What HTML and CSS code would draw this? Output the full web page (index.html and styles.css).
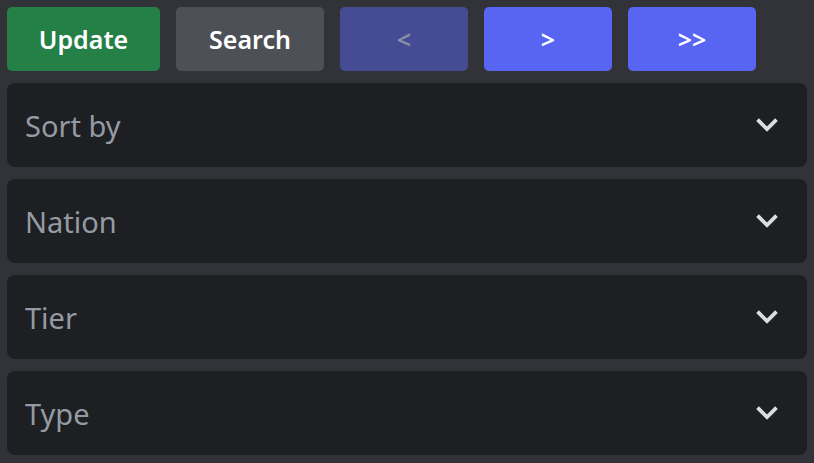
FILE: index.html
```html
<!DOCTYPE html>
<html>
<head>
<meta charset="utf-8">
<link rel="stylesheet" href="styles.css">
</head>
<body>
<div class="panel">
  <div class="row">
    <button class="btn btn-green">Update</button>
    <button class="btn btn-grey">Search</button>
    <button class="btn btn-blurple btn-disabled">&lt;</button>
    <button class="btn btn-blurple">&gt;</button>
    <button class="btn btn-blurple">&gt;&gt;</button>
  </div>
  <div class="select"><span class="placeholder">Sort by</span><svg class="chev" viewBox="0 0 24 24" width="28" height="28"><path d="M5 8.5 L12 15.5 L19 8.5" fill="none" stroke="#dbdee1" stroke-width="3.2" stroke-linecap="square"/></svg></div>
  <div class="select"><span class="placeholder">Nation</span><svg class="chev" viewBox="0 0 24 24" width="28" height="28"><path d="M5 8.5 L12 15.5 L19 8.5" fill="none" stroke="#dbdee1" stroke-width="3.2" stroke-linecap="square"/></svg></div>
  <div class="select"><span class="placeholder">Tier</span><svg class="chev" viewBox="0 0 24 24" width="28" height="28"><path d="M5 8.5 L12 15.5 L19 8.5" fill="none" stroke="#dbdee1" stroke-width="3.2" stroke-linecap="square"/></svg></div>
  <div class="select"><span class="placeholder">Type</span><svg class="chev" viewBox="0 0 24 24" width="28" height="28"><path d="M5 8.5 L12 15.5 L19 8.5" fill="none" stroke="#dbdee1" stroke-width="3.2" stroke-linecap="square"/></svg></div>
</div>
</body>
</html>
```
FILE: styles.css
```css
html, body {
  margin: 0;
  padding: 0;
  background: #313338;
}
body {
  padding: 7px;
  font-family: "Noto Sans", "Open Sans", sans-serif;
}
.panel {
  display: flex;
  flex-direction: column;
  gap: 12px;
  width: 800px;
}
.row {
  display: flex;
  gap: 16px;
}
.btn {
  height: 64px;
  width: 128px;
  border: none;
  border-radius: 5px;
  color: #ffffff;
  font-family: "Noto Sans", "Open Sans", sans-serif;
  font-size: 25px;
  font-weight: 600;
  padding: 0;
  margin: 0;
  display: flex;
  align-items: center;
  justify-content: center;
}
.btn-green { background: #248046; width: 153px; }
.btn-grey { background: #4e5058; width: 148px; }
.btn-blurple { background: #5865f2; }
.btn-disabled { background: #464c94; color: #8c8fa8; }
.select {
  height: 84px;
  background: #1e1f22;
  border-radius: 8px;
  display: flex;
  align-items: center;
  justify-content: space-between;
  padding: 0 26px 0 18px;
}
.placeholder {
  color: #949ba4;
  font-size: 29px;
  font-weight: 400;
}
.chev {
  display: block;
}
```
